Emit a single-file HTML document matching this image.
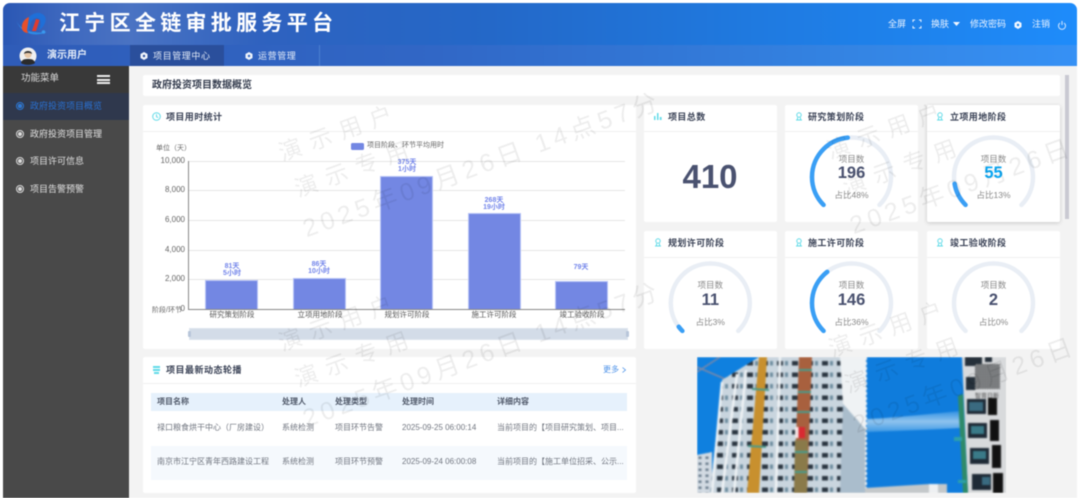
<!DOCTYPE html>
<html lang="zh"><head><meta charset="utf-8"><title>江宁区全链审批服务平台</title>
<style>
*{box-sizing:border-box;margin:0;padding:0}
html,body{width:1080px;height:498px;overflow:hidden;background:#fff}
body{position:relative;font-family:"Liberation Sans","Noto Sans CJK SC",sans-serif;color:#555}
div,span{position:absolute;white-space:nowrap}
#root{left:0;top:0;width:1080px;height:498px;filter:blur(.45px)}
.hd{left:3px;top:3px;width:1074px;height:42px;border-radius:7px 7px 0 0;background:linear-gradient(90deg,#2a57b4 0,#3f69bf 6%,#4a73c3 12%,#2f62bf 24%,#2468c8 45%,#1f7ae0 70%,#1e8cfb 100%)}
.nav{left:3px;top:45px;width:1074px;height:21px;background:linear-gradient(90deg,#2f5cb8 0,#3167c6 40%,#3485e4 80%,#3691f5 100%)}
.ttl{left:59px;top:9px;font-size:21px;line-height:30px;font-weight:700;color:#fff;letter-spacing:4.300px}
.top{top:18px;font-size:9px;line-height:12px;color:#e8f2ff}
.navt{top:50px;font-size:9px;line-height:12px;color:#e4ecf8;letter-spacing:.6px}
.side{left:3px;top:66px;width:126px;height:432px;background:#494949}
.side0{left:3px;top:66px;width:126px;height:27px;background:#393939}
.active{left:3px;top:93px;width:126px;height:27px;background:#2f384d}
.mi{left:30px;font-size:9px;line-height:12px;color:#e0e0e0}
.ring{left:16px;width:8px;height:8px;border:1px solid #ddd;border-radius:50%}
.ring:after{content:"";position:absolute;left:1px;top:1px;width:4px;height:4px;border-radius:50%;background:#ddd}
.main{left:129px;top:66px;width:948px;height:432px;background:#f3f3f3}
.card{background:#fff;border-radius:2px}
.line{height:1px;background:#f0f0f0}
.ct{font-size:9px;line-height:12px;font-weight:700;color:#3a4256;letter-spacing:.4px}
.ax{font-size:8px;line-height:10px;color:#666;text-align:right}
.xl{font-size:7.5px;line-height:10px;color:#555;text-align:center;width:80px}
.bar{background:#7387e3;border:1px solid #b9c4f6;border-bottom:none}
.grid{left:188px;width:437px;height:1px;background:#e6e6e6}
.bl{font-size:7px;line-height:6.5px;color:#7385ea;text-align:center;width:60px;font-weight:700}
.th{top:397px;font-size:8px;line-height:10px;font-weight:700;color:#50596a}
.td{font-size:8px;line-height:10px;color:#717680}
.g1{font-size:8.5px;line-height:12px;color:#8a8a8a;width:60px;text-align:center}
.g2{font-size:16.5px;line-height:20px;font-weight:700;color:#4a5270;width:60px;text-align:center}
.g3{font-size:8.5px;line-height:10px;color:#8a8a8a;width:60px;text-align:center}
.wm{color:rgba(0,0,0,.07);font-size:23px;line-height:26px;transform:rotate(-20deg);transform-origin:0 100%;letter-spacing:9px;z-index:20;pointer-events:none}
.wd{font-size:25px;line-height:30px;letter-spacing:4.500px}
svg{position:absolute;overflow:visible}
</style></head><body>
<div id="root">
<div class="main"></div>
<div class="hd"></div><div class="nav"></div>

<svg style="left:0;top:0" width="60" height="45" viewBox="0 0 60 45">
<path d="M16 20C20 30 32 34 47 32C36 37 22 35 16 20Z" fill="#2e8be6"/>
<circle cx="43.500" cy="32" r="1.800" fill="#3a98ee"/>
<path d="M29 17C24 19 21 24 22 29C23 32 26 33 28 33L31 22Z" fill="#e8502a"/>
<path d="M29 17C33 13 38 12 41 13.500C46 15 47 20 44 25C43 27 41 29 39 30C42 23 41 18 37 18C35 18 33 19 31 22L28 33L27 30Z" fill="#1f6fd8"/>
<path d="M36 19L39.500 20L36 31L32 31Z" fill="#e23b2e"/>
</svg>
<div class="ttl">江宁区全链审批服务平台</div>

<div class="top" style="left:888px">全屏</div>
<svg style="left:913px;top:20px" width="8" height="8" viewBox="0 0 8 8" fill="none" stroke="#e8f2ff" stroke-width="1"><path d="M0 2V0H2M6 0H8V2M8 6V8H6M2 8H0V6"/></svg>
<div class="top" style="left:931px">换肤</div>
<svg style="left:953px;top:22px" width="7" height="4" viewBox="0 0 7 4"><path d="M0 0H7L3.500 4Z" fill="#f2f7ff"/></svg>
<div class="top" style="left:970px">修改密码</div>
<svg style="left:1014px;top:21px" width="8" height="8" viewBox="0 0 8 8"><path d="M4 0L7.500 2V6L4 8L.5 6V2Z" fill="#f2f7ff"/><circle cx="4" cy="4" r="1.200" fill="#1e88f0"/></svg>
<div class="top" style="left:1032px">注销</div>
<svg style="left:1058px;top:21px" width="8" height="9" viewBox="0 0 8 9" fill="none" stroke="#d8e9ff" stroke-width="1"><path d="M2 2A3.500 3.500 0 1 0 6 2M4 0V4"/></svg>

<svg style="left:19px;top:47px" width="18" height="18" viewBox="0 0 18 18">
<circle cx="9" cy="9" r="8.500" fill="#f0f0f0"/><path d="M2 16C3 12 6 12 9 12S15 12 16 16C13 18.500 5 18.500 2 16Z" fill="#2b2b2b"/>
<circle cx="9" cy="7.500" r="3.600" fill="#e8c8a8"/><path d="M5 7C5 3 13 3 13 7C11 5.500 7 5.500 5 7Z" fill="#333"/></svg>
<div class="navt" style="left:47px;font-weight:700;font-size:10px;letter-spacing:0;top:50px">演示用户</div>
<div style="left:130px;top:45px;width:94px;height:21px;background:#2a4f9c"></div>
<div style="left:319px;top:45px;width:1px;height:21px;background:#4a7fd0"></div>
<svg style="left:140px;top:52px" width="8" height="8" viewBox="0 0 8 8"><path d="M4 0L7.500 2V6L4 8L.5 6V2Z" fill="#eef3fb"/><circle cx="4" cy="4" r="1.200" fill="#2a4f9c"/></svg>
<div class="navt" style="left:153px">项目管理中心</div>
<svg style="left:245px;top:52px" width="8" height="8" viewBox="0 0 8 8"><path d="M4 0L7.500 2V6L4 8L.5 6V2Z" fill="#eef3fb"/><circle cx="4" cy="4" r="1.200" fill="#3167c6"/></svg>
<div class="navt" style="left:258px">运营管理</div>

<div class="side"></div><div class="side0"></div><div class="active"></div>
<div style="left:21px;top:73px;font-size:9.500px;line-height:12px;color:#ddd">功能菜单</div>
<div style="left:97px;top:75px;width:13px;height:9px;border-top:2px solid #eee;border-bottom:2px solid #eee"></div>
<div style="left:97px;top:79px;width:13px;height:1.500px;background:#eee"></div>
<div class="ring" style="top:102px;border-color:#2a78d8"></div><div style="left:18px;top:104px;width:4px;height:4px;border-radius:50%;background:#2a78d8"></div>
<div class="mi" style="top:100px;color:#2a70d0">政府投资项目概览</div>
<div class="ring" style="top:130px"></div><div class="mi" style="top:128px">政府投资项目管理</div>
<div class="ring" style="top:157px"></div><div class="mi" style="top:155px">项目许可信息</div>
<div class="ring" style="top:185px"></div><div class="mi" style="top:183px">项目告警预警</div>

<div class="card" style="left:143px;top:75px;width:917px;height:21px"></div>
<div style="left:152px;top:79px;font-size:10px;line-height:13px;font-weight:700;color:#333b4d">政府投资项目数据概览</div>
<div style="left:1065px;top:75px;width:4px;height:144px;background:#c9c9d2"></div>

<div class="card" style="left:143px;top:105px;width:493px;height:244px"></div>
<div class="line" style="left:143px;top:131px;width:493px"></div>
<svg style="left:152px;top:112px" width="9" height="9" viewBox="0 0 9 9" fill="none" stroke="#62dbe8" stroke-width="1"><circle cx="4.500" cy="4.500" r="3.800"/><path d="M4.500 2.200V4.800L6.200 5.600"/></svg>
<div class="ct" style="left:166px;top:111px">项目用时统计</div>

<div class="ax" style="left:156px;top:144px;font-size:7px">单位（天）</div>
<div style="left:351px;top:143px;width:13px;height:7px;background:#7387e3;border-radius:1.500px"></div>
<div style="left:367px;top:141px;font-size:7px;line-height:9px;color:#666">项目阶段、环节平均用时</div>
<div class="grid" style="top:161px"></div><div class="grid" style="top:190px"></div><div class="grid" style="top:220px"></div><div class="grid" style="top:250px"></div><div class="grid" style="top:279px"></div>
<div style="left:188px;top:161px;width:1px;height:149px;background:#888"></div>
<div style="left:188px;top:309px;width:437px;height:1px;background:#888"></div>
<div class="ax" style="left:150px;top:156px;width:35px">10,000</div>
<div class="ax" style="left:150px;top:185px;width:35px">8,000</div>
<div class="ax" style="left:150px;top:215px;width:35px">6,000</div>
<div class="ax" style="left:150px;top:245px;width:35px">4,000</div>
<div class="ax" style="left:150px;top:274px;width:35px">2,000</div>
<div class="ax" style="left:176px;top:304px;width:9px">0</div>
<div class="ax" style="left:152px;top:306px;font-size:7px">阶段/环节</div>

<div class="bar" style="left:205px;top:280px;width:53px;height:29px"></div>
<div class="bar" style="left:293px;top:278px;width:53px;height:31px"></div>
<div class="bar" style="left:380px;top:176px;width:53px;height:133px"></div>
<div class="bar" style="left:468px;top:213px;width:53px;height:96px"></div>
<div class="bar" style="left:555px;top:281px;width:53px;height:28px"></div>
<div class="bl" style="left:202px;top:264px">81天<br>5小时</div>
<div class="bl" style="left:289px;top:262px">86天<br>10小时</div>
<div class="bl" style="left:377px;top:160px">375天<br>1小时</div>
<div class="bl" style="left:464px;top:198px">268天<br>19小时</div>
<div class="bl" style="left:551px;top:265px">79天</div>
<div class="xl" style="left:192px;top:310px">研究策划阶段</div>
<div class="xl" style="left:280px;top:310px">立项用地阶段</div>
<div class="xl" style="left:367px;top:310px">规划许可阶段</div>
<div class="xl" style="left:454px;top:310px">施工许可阶段</div>
<div class="xl" style="left:542px;top:310px">竣工验收阶段</div>
<div style="left:189px;top:328px;width:439px;height:12px;background:#d3dce8;border:1px solid #dde4ee"></div>
<div style="left:188px;top:331px;width:3px;height:6px;background:#b8c6da;border-radius:1px"></div>
<div style="left:626px;top:331px;width:3px;height:6px;background:#b8c6da;border-radius:1px"></div>

<div class="card" style="left:143px;top:357px;width:493px;height:136px"></div>
<div class="line" style="left:143px;top:383px;width:493px"></div>
<div style="left:153px;top:366px;width:7px;height:1.500px;background:#62dbe8"></div><div style="left:153px;top:369px;width:7px;height:1.500px;background:#62dbe8"></div><div style="left:154px;top:372px;width:5px;height:1.500px;background:#62dbe8"></div>
<div class="ct" style="left:166px;top:364px;letter-spacing:.5px">项目最新动态轮播</div>
<div style="left:603px;top:365px;font-size:8px;line-height:10px;color:#4a90e8">更多</div>
<svg style="left:622px;top:367px" width="4" height="6" viewBox="0 0 4 6" fill="none" stroke="#4a90e8" stroke-width=".8"><path d="M.5 .5L3.500 3L.5 5.500"/></svg>
<div style="left:151px;top:393px;width:476px;height:18px;background:#e6f1fc"></div>
<div style="left:151px;top:446px;width:476px;height:34px;background:#f5f9fd"></div>
<div class="th" style="left:157px">项目名称</div><div class="th" style="left:282px">处理人</div><div class="th" style="left:335px">处理类型</div><div class="th" style="left:402px">处理时间</div><div class="th" style="left:497px">详细内容</div>
<div class="td" style="left:157px;top:423px">禄口粮食烘干中心（厂房建设）</div><div class="td" style="left:282px;top:423px">系统检测</div><div class="td" style="left:335px;top:423px">项目环节告警</div><div class="td" style="left:402px;top:423px">2025-09-25 06:00:14</div><div class="td" style="left:497px;top:423px">当前项目的【项目研究策划、项目...</div>
<div class="td" style="left:157px;top:457px">南京市江宁区青年西路建设工程</div><div class="td" style="left:282px;top:457px">系统检测</div><div class="td" style="left:335px;top:457px">项目环节预警</div><div class="td" style="left:402px;top:457px">2025-09-24 06:00:08</div><div class="td" style="left:497px;top:457px">当前项目的【施工单位招采、公示...</div>

<div class="card" style="left:644px;top:105px;width:133px;height:117px"></div>
<div class="card" style="left:785px;top:105px;width:133px;height:117px"></div>
<div class="card" style="left:927px;top:105px;width:133px;height:117px;box-shadow:0 1px 4px rgba(0,0,0,.18)"></div>
<div class="card" style="left:644px;top:231px;width:133px;height:118px"></div>
<div class="card" style="left:785px;top:231px;width:133px;height:118px"></div>
<div class="card" style="left:927px;top:231px;width:133px;height:118px"></div>
<div class="line" style="left:644px;top:131px;width:133px"></div><div class="line" style="left:785px;top:131px;width:133px"></div><div class="line" style="left:927px;top:131px;width:133px"></div>
<div class="line" style="left:644px;top:257px;width:133px"></div><div class="line" style="left:785px;top:257px;width:133px"></div><div class="line" style="left:927px;top:257px;width:133px"></div>

<svg style="left:654px;top:112px" width="8" height="9" viewBox="0 0 8 9" fill="#62dbe8"><rect x="0" y="4" width="1.500" height="4"/><rect x="3" y="1" width="1.500" height="7"/><rect x="5.800" y="5" width="1.800" height="3"/></svg>
<div class="ct" style="left:668px;top:111px">项目总数</div>
<div style="left:660px;top:157px;width:100px;text-align:center;font-size:33px;line-height:40px;font-weight:700;color:#4a5270">410</div>

<svg style="left:795px;top:112px" width="8" height="9" viewBox="0 0 8 9" fill="none" stroke="#62dbe8"><circle cx="4" cy="3" r="2.200"/><path d="M1 8H7M2.500 5.500V8M5.500 5.500V8"/></svg>
<div class="ct" style="left:808px;top:111px">研究策划阶段</div>
<svg style="left:936px;top:112px" width="8" height="9" viewBox="0 0 8 9" fill="none" stroke="#62dbe8"><circle cx="4" cy="3" r="2.200"/><path d="M1 8H7M2.500 5.500V8M5.500 5.500V8"/></svg>
<div class="ct" style="left:950px;top:111px">立项用地阶段</div>
<svg style="left:654px;top:238px" width="8" height="9" viewBox="0 0 8 9" fill="none" stroke="#62dbe8"><circle cx="4" cy="3" r="2.200"/><path d="M1 8H7M2.500 5.500V8M5.500 5.500V8"/></svg>
<div class="ct" style="left:668px;top:237px">规划许可阶段</div>
<svg style="left:795px;top:238px" width="8" height="9" viewBox="0 0 8 9" fill="none" stroke="#62dbe8"><circle cx="4" cy="3" r="2.200"/><path d="M1 8H7M2.500 5.500V8M5.500 5.500V8"/></svg>
<div class="ct" style="left:808px;top:237px">施工许可阶段</div>
<svg style="left:936px;top:238px" width="8" height="9" viewBox="0 0 8 9" fill="none" stroke="#62dbe8"><circle cx="4" cy="3" r="2.200"/><path d="M1 8H7M2.500 5.500V8M5.500 5.500V8"/></svg>
<div class="ct" style="left:950px;top:237px">竣工验收阶段</div>

<svg style="left:0;top:0" width="1080" height="498" fill="none" stroke-linecap="round" stroke-width="4.500">
<g transform="translate(851.500 177)"><path d="M-27.930 27.930A39.500 39.500 0 1 1 27.930 27.930" stroke="#e9eef5"/><path d="M-27.930 27.930A39.500 39.500 0 1 1 27.930 27.930" stroke="#3a9ff5" pathLength="100" stroke-dasharray="48 200"/></g>
<g transform="translate(993.500 177)"><path d="M-27.930 27.930A39.500 39.500 0 1 1 27.930 27.930" stroke="#e9eef5"/><path d="M-27.930 27.930A39.500 39.500 0 1 1 27.930 27.930" stroke="#3a9ff5" pathLength="100" stroke-dasharray="13 200"/></g>
<g transform="translate(710.300 303)"><path d="M-27.930 27.930A39.500 39.500 0 1 1 27.930 27.930" stroke="#e9eef5"/><path d="M-27.930 27.930A39.500 39.500 0 1 1 27.930 27.930" stroke="#3a9ff5" pathLength="100" stroke-dasharray="3 200"/></g>
<g transform="translate(851.500 303)"><path d="M-27.930 27.930A39.500 39.500 0 1 1 27.930 27.930" stroke="#e9eef5"/><path d="M-27.930 27.930A39.500 39.500 0 1 1 27.930 27.930" stroke="#3a9ff5" pathLength="100" stroke-dasharray="36 200"/></g>
<g transform="translate(993.500 303)"><path d="M-27.930 27.930A39.500 39.500 0 1 1 27.930 27.930" stroke="#e9eef5"/></g>
</svg>

<div class="g1" style="left:821.500px;top:153px">项目数</div><div class="g2" style="left:821.500px;top:163px">196</div><div class="g3" style="left:821.500px;top:190px">占比48%</div>
<div class="g1" style="left:963.500px;top:153px">项目数</div><div class="g2" style="left:963.500px;top:163px;color:#0aa8f5">55</div><div class="g3" style="left:963.500px;top:190px">占比13%</div>
<div class="g1" style="left:680.300px;top:279px">项目数</div><div class="g2" style="left:680.300px;top:290px">11</div><div class="g3" style="left:680.300px;top:317px">占比3%</div>
<div class="g1" style="left:821.500px;top:279px">项目数</div><div class="g2" style="left:821.500px;top:290px">146</div><div class="g3" style="left:821.500px;top:317px">占比36%</div>
<div class="g1" style="left:963.500px;top:279px">项目数</div><div class="g2" style="left:963.500px;top:290px">2</div><div class="g3" style="left:963.500px;top:317px">占比0%</div>

<div style="left:697px;top:357px;width:309px;height:136px;overflow:hidden">
<svg style="left:0;top:0;filter:blur(.7px)" width="309" height="136" viewBox="697 357 309 136">
<defs>
<pattern id="w" x="700" y="358" width="15" height="11.500" patternUnits="userSpaceOnUse"><rect width="15" height="11.500" fill="#c9d5de"/><rect x="2" y="3" width="6" height="4.500" fill="#2a3540"/><rect x="10" y="3" width="3" height="4.500" fill="#6f8da0"/></pattern>
<pattern id="w2" x="697" y="455" width="7" height="6" patternUnits="userSpaceOnUse"><rect width="7" height="6" fill="#d2dae2"/><rect x="1.500" y="1.500" width="3" height="2.500" fill="#6a7b8c"/></pattern>
<pattern id="q" x="975" y="364" width="2.400" height="2.400" patternUnits="userSpaceOnUse"><rect width="2.400" height="2.400" fill="#d8dde2"/><rect width="1.300" height="1.300" fill="#222"/><rect x="1.200" y="1.200" width="1.200" height="1.200" fill="#333"/></pattern>
<linearGradient id="cl" x1="0" y1="0" x2="0" y2="1"><stop offset="0" stop-color="#2f90e2"/><stop offset=".5" stop-color="#8fc3ee"/><stop offset="1" stop-color="#3c98e4"/></linearGradient>
</defs>
<rect x="697" y="357" width="309" height="136" fill="#0f80df"/>
<path d="M697 367L725 379M697 372L720 357" stroke="#7a88a8" stroke-width="1.500"/>
<path d="M697 455L712 452V493H697Z" fill="url(#w2)"/>
<path d="M722 380L759 357H866V493H710Z" fill="url(#w)"/>
<path d="M722 382L712 493M737 374L722 493M746 370L734 493" stroke="#eef2f5" stroke-width="2.500"/>
<path d="M780 357L776 493" stroke="#eef2f5" stroke-width="2.500"/>
<path d="M840 357H866V430L843 404Z" fill="#eff2f4"/>
<path d="M843 404L866 430V493H840Z" fill="#aabdcc"/>
<path d="M759 357H767L759 493H747Z" fill="#c8902e"/>
<path d="M799 357H812L807 493H794Z" fill="#a8603e"/>
<path d="M795 440H808L807 493H794Z" fill="#8a7a4a"/>
<rect x="795" y="427" width="10" height="11" fill="#d82a32"/><rect x="795" y="427" width="3.500" height="11" fill="#f4e4e4"/>
<path d="M752 389L769 390M748 446L766 447M799 370H812M798 392H811M797 412H810M795 452H808M795 472H807" stroke="#4a9a8a" stroke-width="2"/>
<rect x="866" y="357" width="96" height="136" fill="#0f7cdc"/>
<path d="M866 357V493" stroke="#f0f2f4" stroke-width="2" stroke-dasharray="3 2"/>
<path d="M867 419C890 418 930 414 960 411V428C930 430 890 431 867 432Z" fill="url(#cl)"/>
<path d="M865 488L930 484H947V493H865Z" fill="#c4c8ca"/><path d="M929 484H938V493H929Z" fill="#eef0f2"/>
<path d="M962 357H1007V493H968Z" fill="#d8dadc"/>
<path d="M958 396L963 394L968 493H963Z" fill="#2e8a6a"/>
<path d="M954 437H962V441H954ZM958 480H966V483H958Z" fill="#2ea0a8"/>
<rect x="965" y="357" width="17" height="9" fill="#25303a"/><rect x="966" y="377" width="9" height="13" fill="#25303a"/>
<rect x="967" y="399" width="19" height="15" fill="#1e2a36"/><rect x="969" y="402" width="14" height="9" fill="#3a6a80"/>
<rect x="968" y="423" width="19" height="15" fill="#1e2a36"/><rect x="971" y="426" width="13" height="8" fill="#3a7a88"/>
<rect x="970" y="448" width="19" height="16" fill="#1e2a36"/><rect x="973" y="451" width="13" height="8" fill="#3a7a88"/>
<rect x="972" y="474" width="19" height="16" fill="#1e2a36"/><rect x="982" y="477" width="8" height="8" fill="#3a6a80"/>
<rect x="988" y="398" width="9" height="17" fill="#111"/><rect x="990" y="420" width="9" height="21" fill="#111"/><rect x="992" y="445" width="9" height="23" fill="#111"/><rect x="993" y="473" width="10" height="20" fill="#111"/>
<rect x="985" y="357" width="7" height="5" fill="#25303a"/>
<rect x="975" y="364" width="25" height="25" fill="url(#q)"/>
<text x="975" y="398" font-size="6" fill="#444" font-family="Liberation Sans,Noto Sans CJK SC,sans-serif">智育日新</text>
</svg>
</div>

<div class="wm" style="left:284px;top:140px">演示用户</div>
<div class="wm" style="left:300px;top:176px">演示专用</div>
<div class="wm wd" style="left:309px;top:214px">2025年09月26日 14点57分</div>
<div class="wm" style="left:284px;top:330px">演示用户</div>
<div class="wm" style="left:300px;top:366px">演示专用</div>
<div class="wm wd" style="left:309px;top:404px">2025年09月26日 14点57分</div>
<div class="wm" style="left:832px;top:138px">演示用户</div>
<div class="wm" style="left:848px;top:174px">演示专用</div>
<div class="wm wd" style="left:856px;top:211px">2025年09月26日 14点57分</div>
<div class="wm" style="left:834px;top:336px">演示用户</div>
<div class="wm" style="left:850px;top:372px">演示专用</div>
<div class="wm wd" style="left:859px;top:410px">2025年09月26日 14点57分</div>
</div>
</body></html>
